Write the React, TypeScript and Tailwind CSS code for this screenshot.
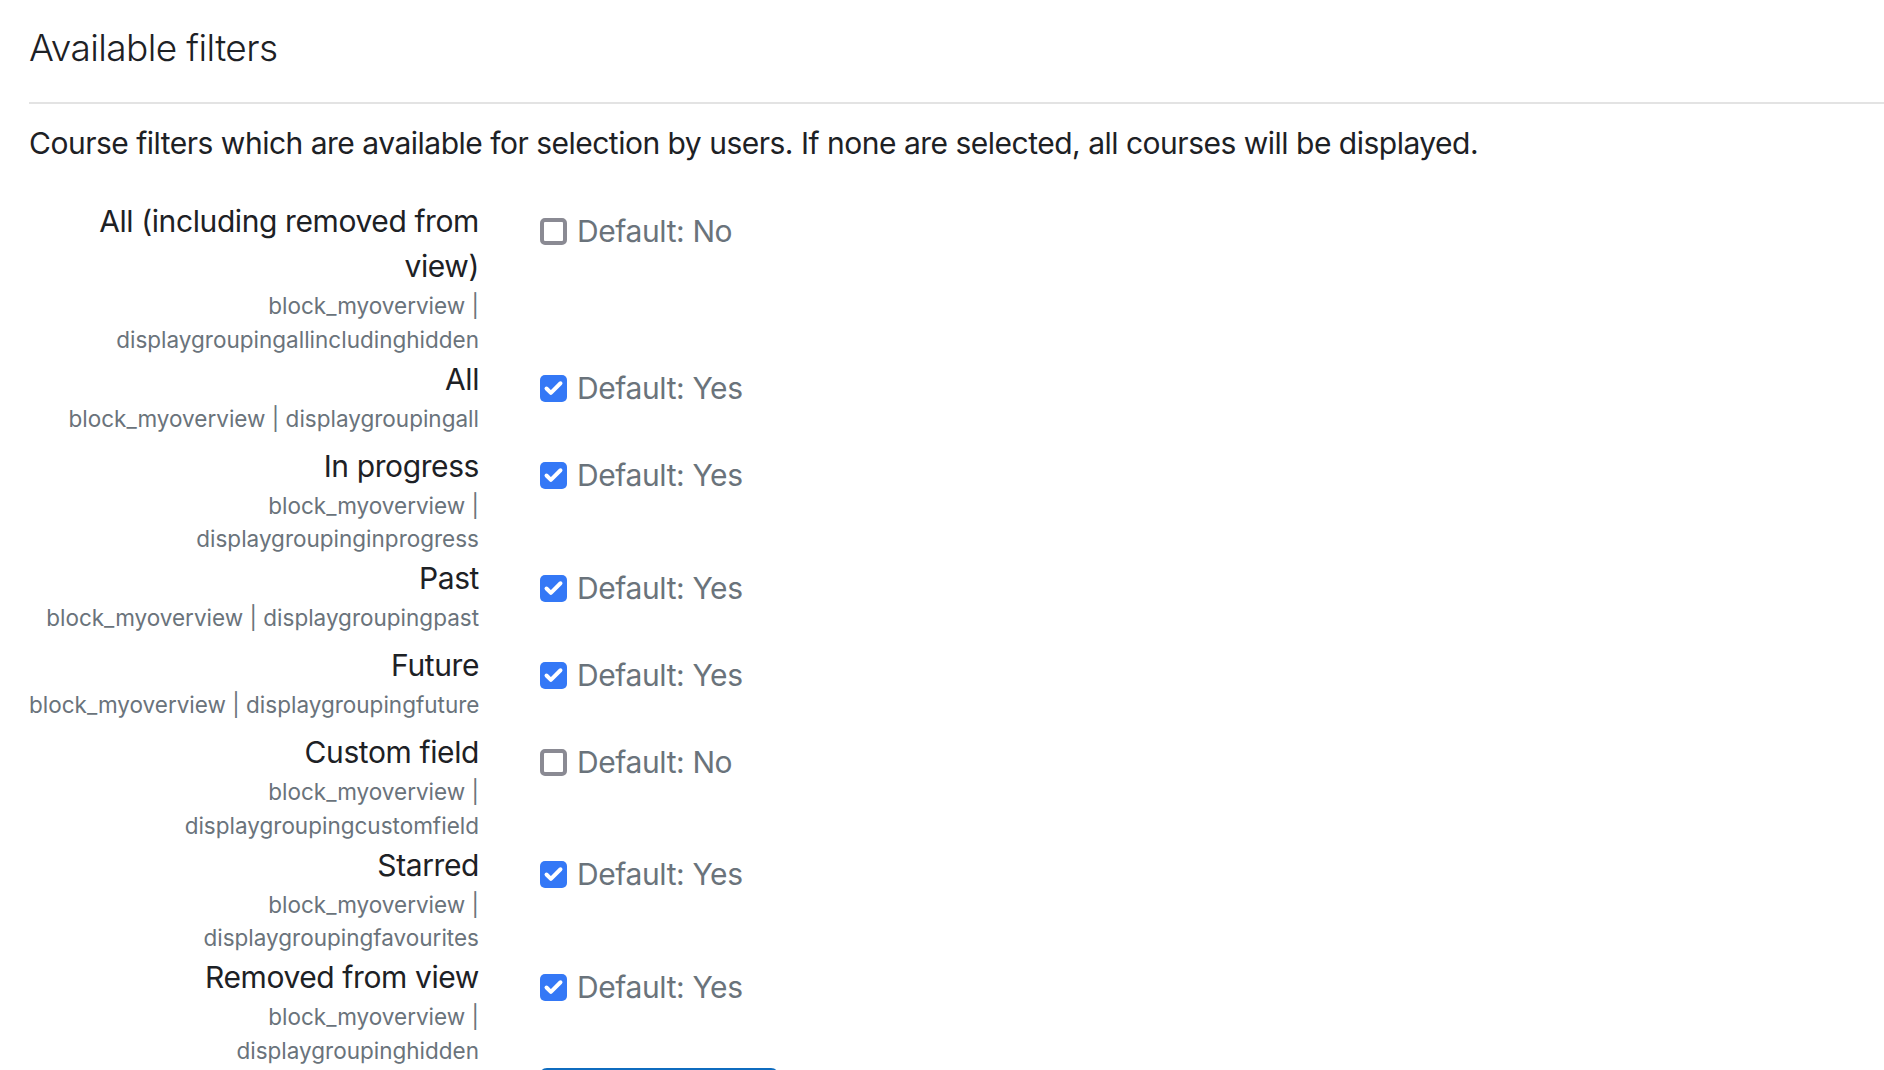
import { Check } from 'lucide-react';

type Filter = {
  label: string[];
  key: string[];
  checked: boolean;
};

const filters: Filter[] = [
  {
    label: ['All (including removed from', 'view)'],
    key: ['block_myoverview |', 'displaygroupingallincludinghidden'],
    checked: false,
  },
  { label: ['All'], key: ['block_myoverview | displaygroupingall'], checked: true },
  {
    label: ['In progress'],
    key: ['block_myoverview |', 'displaygroupinginprogress'],
    checked: true,
  },
  { label: ['Past'], key: ['block_myoverview | displaygroupingpast'], checked: true },
  { label: ['Future'], key: ['block_myoverview | displaygroupingfuture'], checked: true },
  {
    label: ['Custom field'],
    key: ['block_myoverview |', 'displaygroupingcustomfield'],
    checked: false,
  },
  {
    label: ['Starred'],
    key: ['block_myoverview |', 'displaygroupingfavourites'],
    checked: true,
  },
  {
    label: ['Removed from view'],
    key: ['block_myoverview |', 'displaygroupinghidden'],
    checked: true,
  },
];

function Checkbox({ checked }: { checked: boolean }) {
  if (checked) {
    return (
      <span className="flex h-[27px] w-[27px] shrink-0 items-center justify-center rounded-[5px] bg-[#3478f6]">
        <Check className="h-[21px] w-[21px] text-white" strokeWidth={4.5} />
      </span>
    );
  }
  return <span className="h-[27px] w-[27px] shrink-0 rounded-[5px] border-[4px] border-[#8a8a93] bg-white" />;
}

export default function App() {
  return (
    <div className="min-h-screen bg-white pl-[29px] pt-[24px] font-['Inter',sans-serif] text-[#1d2125]">
      {/* Heading */}
      <h3 className="text-[37px] font-light leading-[47px] tracking-[-0.6px]">Available filters</h3>
      <div className="mt-[31px] h-[2px] bg-[#e3e3e3]" />
      <p className="mt-[17px] text-[30px] leading-[45px] tracking-[-0.5px]">
        Course filters which are available for selection by users. If none are selected, all courses will be displayed.
      </p>

      {/* Filter rows */}
      <div className="mt-[33px]">
        {filters.map((f) => (
          <div key={f.key.join('')} className="flex min-h-[87px]">
            <div className="w-[450px] shrink-0 text-right">
              {f.label.map((l) => (
                <div key={l} className="whitespace-nowrap text-[30px] leading-[45px] tracking-[-0.4px]">
                  {l}
                </div>
              ))}
              {f.key.map((k) => (
                <div key={k} className="whitespace-nowrap text-[22.5px] leading-[33.75px] text-[#6a737b]">
                  {k}
                </div>
              ))}
            </div>
            <div className="ml-[61px] pt-[9.5px]">
              <label className="flex items-center gap-[10px]">
                <Checkbox checked={f.checked} />
                <span className="text-[30px] leading-[45px] tracking-[-0.4px] text-[#6a737b]">
                  Default: {f.checked ? 'Yes' : 'No'}
                </span>
              </label>
            </div>
          </div>
        ))}
      </div>

      <div className="ml-[510px]">
        <button className="h-[60px] w-[240px] rounded-[8px] bg-[#0f6cbf] text-[30px] text-white">Save changes</button>
      </div>
    </div>
  );
}
